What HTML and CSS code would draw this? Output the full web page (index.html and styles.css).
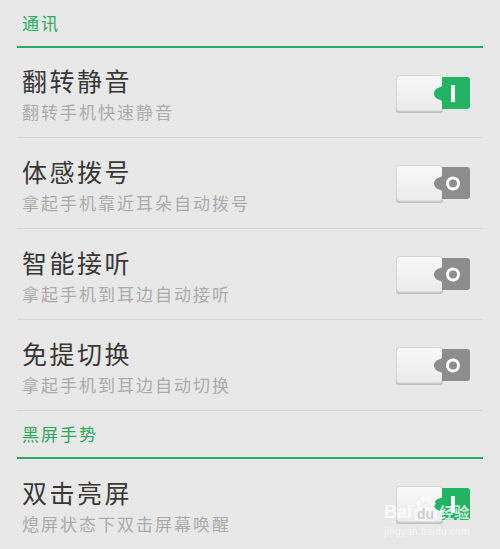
FILE: index.html
```html
<!DOCTYPE html>
<html>
<head>
  <title>手势设置</title>
  <link rel="stylesheet" href="styles.css">
</head>
<body>
  <svg width="0" height="0" class="defs">
    <defs>
      <linearGradient id="knob" x1="0" y1="0" x2="0" y2="1">
        <stop offset="0" stop-color="#f8f8f8"/>
        <stop offset="1" stop-color="#ebebeb"/>
      </linearGradient>
    </defs>
  </svg>

  <div class="settings">

    <!-- 通讯 -->
    <div class="section-header">通讯</div>

    <div class="row">
      <div class="row-text">
        <div class="row-title">翻转静音</div>
        <div class="row-desc">翻转手机快速静音</div>
      </div>
      <svg class="switch on" viewBox="0 0 76 40" width="76" height="40">
        <rect x="1" y="2" width="47" height="37" rx="3" fill="#c2c2c2"/>
        <rect x="1.5" y="1.5" width="46" height="35.5" rx="3" fill="url(#knob)" stroke="#d4d4d4" stroke-width="1"/>
        <path class="tab" d="M47,3 H72 Q75,3 75,6 V32 Q75,35 72,35 H47 V28 C47,26.5 46,26 44,25.5 C40.5,24.5 39,22 39,19.5 C39,17 40.5,14.5 44,13.5 C46,13 47,12.5 47,11 Z"/>
        <rect x="56" y="11" width="4" height="17" fill="#ffffff"/>
      </svg>
    </div>

    <div class="row">
      <div class="row-text">
        <div class="row-title">体感拨号</div>
        <div class="row-desc">拿起手机靠近耳朵自动拨号</div>
      </div>
      <svg class="switch off" viewBox="0 0 76 40" width="76" height="40">
        <rect x="1" y="2" width="47" height="37" rx="3" fill="#c2c2c2"/>
        <rect x="1.5" y="1.5" width="46" height="35.5" rx="3" fill="url(#knob)" stroke="#d4d4d4" stroke-width="1"/>
        <path class="tab" d="M47,3 H72 Q75,3 75,6 V32 Q75,35 72,35 H47 V28 C47,26.5 46,26 44,25.5 C40.5,24.5 39,22 39,19.5 C39,17 40.5,14.5 44,13.5 C46,13 47,12.5 47,11 Z"/>
        <circle cx="58" cy="19.5" r="5.5" fill="none" stroke="#ffffff" stroke-width="3"/>
      </svg>
    </div>

    <div class="row">
      <div class="row-text">
        <div class="row-title">智能接听</div>
        <div class="row-desc">拿起手机到耳边自动接听</div>
      </div>
      <svg class="switch off" viewBox="0 0 76 40" width="76" height="40">
        <rect x="1" y="2" width="47" height="37" rx="3" fill="#c2c2c2"/>
        <rect x="1.5" y="1.5" width="46" height="35.5" rx="3" fill="url(#knob)" stroke="#d4d4d4" stroke-width="1"/>
        <path class="tab" d="M47,3 H72 Q75,3 75,6 V32 Q75,35 72,35 H47 V28 C47,26.5 46,26 44,25.5 C40.5,24.5 39,22 39,19.5 C39,17 40.5,14.5 44,13.5 C46,13 47,12.5 47,11 Z"/>
        <circle cx="58" cy="19.5" r="5.5" fill="none" stroke="#ffffff" stroke-width="3"/>
      </svg>
    </div>

    <div class="row">
      <div class="row-text">
        <div class="row-title">免提切换</div>
        <div class="row-desc">拿起手机到耳边自动切换</div>
      </div>
      <svg class="switch off" viewBox="0 0 76 40" width="76" height="40">
        <rect x="1" y="2" width="47" height="37" rx="3" fill="#c2c2c2"/>
        <rect x="1.5" y="1.5" width="46" height="35.5" rx="3" fill="url(#knob)" stroke="#d4d4d4" stroke-width="1"/>
        <path class="tab" d="M47,3 H72 Q75,3 75,6 V32 Q75,35 72,35 H47 V28 C47,26.5 46,26 44,25.5 C40.5,24.5 39,22 39,19.5 C39,17 40.5,14.5 44,13.5 C46,13 47,12.5 47,11 Z"/>
        <circle cx="58" cy="19.5" r="5.5" fill="none" stroke="#ffffff" stroke-width="3"/>
      </svg>
    </div>

    <!-- 黑屏手势 -->
    <div class="section-header">黑屏手势</div>

    <div class="row last">
      <div class="row-text">
        <div class="row-title">双击亮屏</div>
        <div class="row-desc">熄屏状态下双击屏幕唤醒</div>
      </div>
      <svg class="switch on" viewBox="0 0 76 40" width="76" height="40">
        <rect x="1" y="2" width="47" height="37" rx="3" fill="#c2c2c2"/>
        <rect x="1.5" y="1.5" width="46" height="35.5" rx="3" fill="url(#knob)" stroke="#d4d4d4" stroke-width="1"/>
        <path class="tab" d="M47,3 H72 Q75,3 75,6 V32 Q75,35 72,35 H47 V28 C47,26.5 46,26 44,25.5 C40.5,24.5 39,22 39,19.5 C39,17 40.5,14.5 44,13.5 C46,13 47,12.5 47,11 Z"/>
        <rect x="56" y="11" width="4" height="17" fill="#ffffff"/>
      </svg>
    </div>
  </div>

  <!-- watermark -->
  <div class="watermark">
    <div class="wm-logo">
      <span class="wm-bai">Bai</span>
      <span class="wm-du">
        <svg class="wm-paw" viewBox="0 0 24 12" width="22" height="11">
          <ellipse cx="4" cy="8" rx="2.4" ry="3"/>
          <ellipse cx="9" cy="3.5" rx="2.4" ry="3"/>
          <ellipse cx="15" cy="3.5" rx="2.4" ry="3"/>
          <ellipse cx="20" cy="8" rx="2.4" ry="3"/>
        </svg>
        <span class="wm-du-text">du</span>
      </span>
      <span class="wm-cn">经验</span>
    </div>
    <div class="wm-url">jingyan.baidu.com</div>
  </div>
</body>
</html>
```

FILE: styles.css
```css
body {
  margin: 0;
  background-color: #e8e8e8;
  font-family: "Noto Sans CJK SC", "Noto Sans", sans-serif;
  overflow: hidden;
}

.defs {
  position: absolute;
}

.settings {
  margin: 0 17px;
}

.section-header {
  height: 46px;
  padding-left: 5px;
  border-bottom: 2px solid #27ad5f;
  color: #2aa95c;
  font-size: 17px;
  line-height: 20px;
  letter-spacing: 2px;
  display: flex;
  align-items: center;
}

.section-header + .row {
  height: 90px;
}

.row {
  display: flex;
  align-items: center;
  justify-content: space-between;
  height: 91px;
  box-sizing: border-box;
  padding: 0 12px 0 5px;
  border-bottom: 1px solid #d5d5d5;
}

.row.last {
  border-bottom: none;
}

.row-text {
  margin-top: 2px;
}

.row-title {
  color: #383838;
  font-size: 25px;
  line-height: 30px;
  letter-spacing: 2.5px;
}

.row-desc {
  margin-top: 7px;
  color: #ababab;
  font-size: 17px;
  line-height: 20px;
  letter-spacing: 2px;
}

.switch {
  display: block;
  margin-top: 2px;
}

.switch.on .tab {
  fill: #22b462;
}

.switch.off .tab {
  fill: #8d8d8d;
}

/* baidu watermark */
.watermark {
  position: absolute;
  left: 384px;
  top: 494px;
  color: rgba(255, 255, 255, 0.8);
  font-family: "Liberation Sans", Arial, sans-serif;
}

.wm-logo {
  display: flex;
  align-items: flex-end;
  height: 27px;
}

.wm-bai {
  font-size: 18px;
  font-weight: bold;
  line-height: 18px;
}

.wm-du {
  display: flex;
  flex-direction: column;
  align-items: center;
  margin: 0 2px;
}

.wm-paw {
  fill: rgba(255, 255, 255, 0.8);
  display: block;
}

.wm-du-text {
  font-size: 14px;
  font-weight: bold;
  line-height: 14px;
  background-color: rgba(255, 255, 255, 0.55);
  color: rgba(200, 200, 200, 0.9);
  border-radius: 6px 6px 4px 4px;
  padding: 0 3px;
}

.wm-cn {
  font-family: "Noto Sans CJK SC", sans-serif;
  font-size: 15px;
  line-height: 18px;
  font-weight: bold;
}

.wm-url {
  margin-top: 5px;
  font-size: 10px;
  line-height: 12px;
  letter-spacing: 0.3px;
  color: rgba(255, 255, 255, 0.6);
}
```
